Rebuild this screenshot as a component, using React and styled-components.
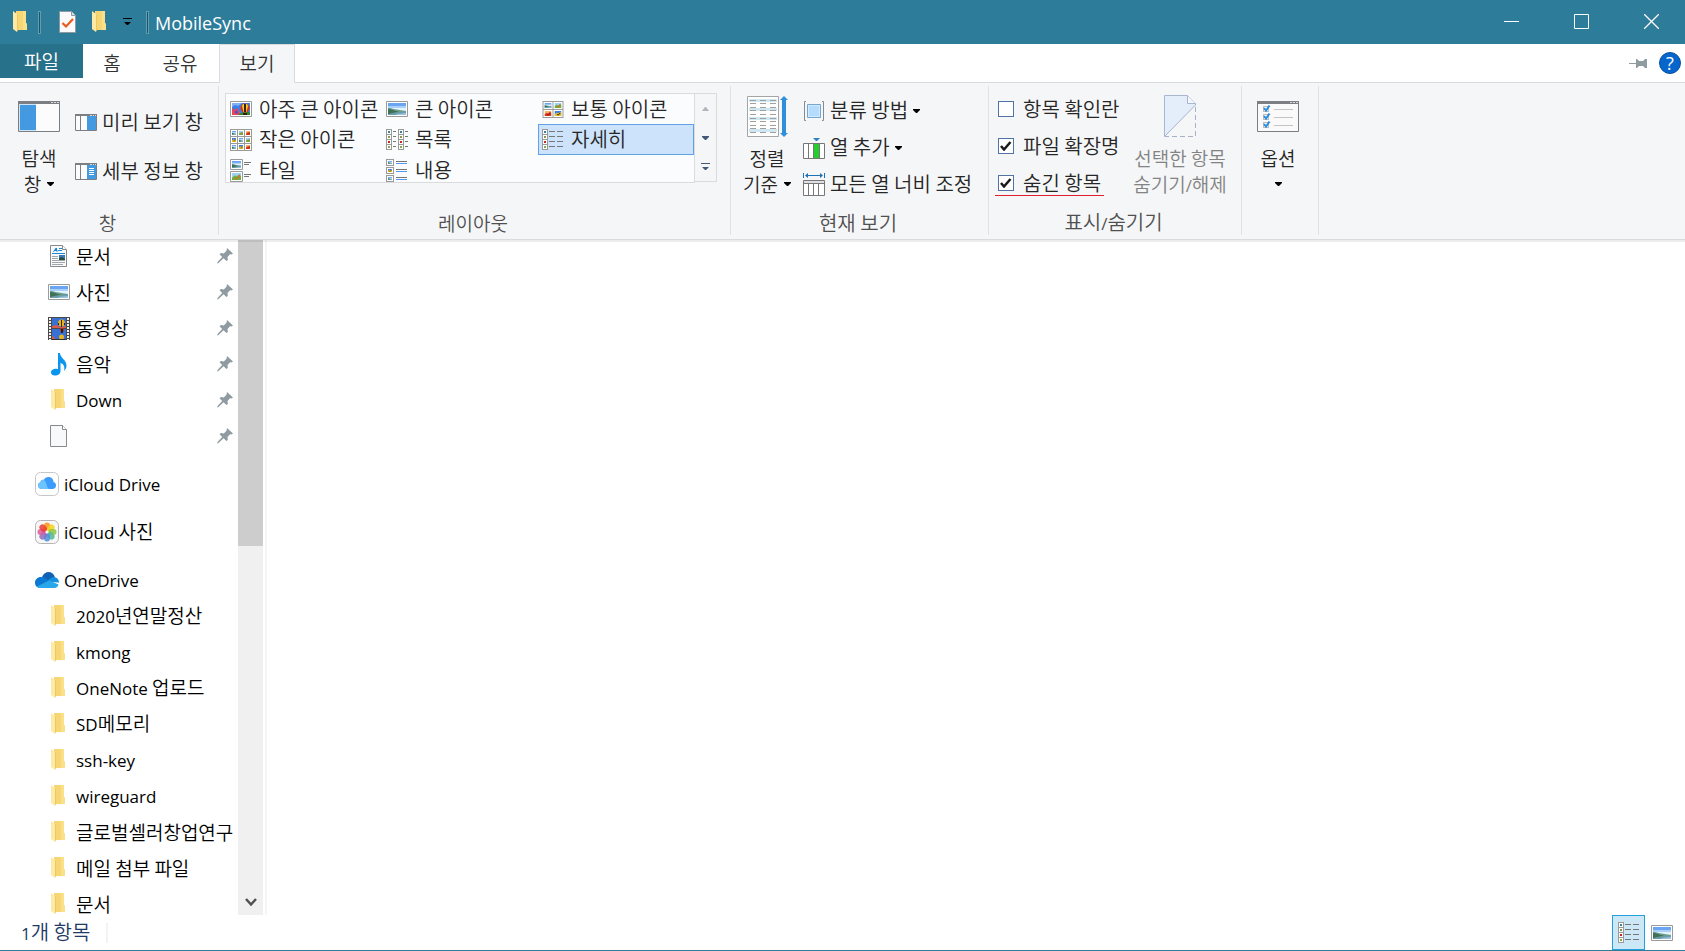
import React from 'react';
import styled, { createGlobalStyle } from 'styled-components';

const GlobalStyle = createGlobalStyle`
  *, *::before, *::after { box-sizing: border-box; }
  body {
    margin: 0;
    background: #fff;
    color: #000;
    font-family: 'Open Sans', 'Noto Sans CJK KR', sans-serif;
    font-size: 20px;
    line-height: 24px;
  }
  button {
    margin: 0;
    padding: 0;
    border: 0;
    background: none;
    color: inherit;
    font: inherit;
  }
  svg { display: block; flex: none; }
`;

/* ---------- text ---------- */

const Hangul = styled.span`
  font-family: 'Noto Sans CJK KR', sans-serif;
  font-weight: 350;
  font-size: ${(p) => (p.$compact ? 19 : 20)}px;
  white-space: pre;
`;

const Latin = styled.span`
  font-family: 'Open Sans', sans-serif;
  font-size: 17px;
  white-space: pre;
`;

const TextLine = styled.span`
  white-space: nowrap;
`;

/* Latin runs are set smaller than Hangul so that both look the same height. */
function Label({ children, compact }) {
  const runs = children.match(/[\x21-\x7e]+( [\x21-\x7e]+)*|[^\x21-\x7e]+/g) || [];
  return (
    <TextLine>
      {runs.map((run, i) =>
        /[\x21-\x7e]/.test(run)
          ? <Latin key={i}>{run}</Latin>
          : <Hangul key={i} $compact={compact}>{run}</Hangul>
      )}
    </TextLine>
  );
}

/* ---------- icons ---------- */

const Folder = () => (
  <svg width="18" height="22" viewBox="0 0 18 22" aria-hidden="true">
    <path d="M4 0H14V12L15 13V19H4Z" fill="#f7d775" />
    <path d="M11 0H14V12L15 13V19H11Z" fill="#fbe08a" />
    <path d="M1 0L5 3V21L1 18Z" fill="#ffe9a6" />
    <path d="M5 3V21L6 19V4Z" fill="#eec75f" />
  </svg>
);

const Caret = ({ color = '#000' }) => (
  <svg width="7" height="4" viewBox="0 0 7 4" aria-hidden="true">
    <path d="M0 0H7V1L4 4H3L0 1Z" fill={color} />
  </svg>
);

const BarCaret = ({ color = '#000' }) => (
  <svg width="9" height="8" viewBox="0 0 9 8" aria-hidden="true">
    <path d="M0 0H9V1H0ZM1 4H8L5 7H4Z" fill={color} />
  </svg>
);

const CheckedDocument = () => (
  <svg width="18" height="22" viewBox="0 0 18 22" aria-hidden="true">
    <path d="M.5.5H12.500L16.500 4.500V21.500H.5Z" fill="#fafafa" stroke="#8e9aa0" />
    <path d="M12.500.5V4.500H16.500" fill="#dde2e4" stroke="#8e9aa0" />
    <path d="M3.500 12L7 15.500L14 8" fill="none" stroke="#ea5b1b" strokeWidth="2.200" />
  </svg>
);

/* Miniature pictures; each kind has its own colours. */
function Scene({ x, y, w, h, kind = 'lake' }) {
  if (kind === 'lake') {
    return (
      <svg x={x} y={y} width={w} height={h} viewBox="0 0 18 12" preserveAspectRatio="none">
        <path d="M0 0H18V12H0Z" fill="#6aa5f2" />
        <path d="M0 3H18V6H0Z" fill="#a9d0fa" />
        <path d="M0 5H18V8H0Z" fill="#e3f3fc" />
        <path d="M0 5C4 5 8 7 18 8V12H0Z" fill="#6c9c8e" />
        <path d="M0 6C3 6 7 8 11 8.500L0 11Z" fill="#3f7058" />
        <path d="M2 11L18 8.500V12H0Z" fill="#6a9db4" />
        <path d="M9 11L18 10V12H8Z" fill="#9cc4dd" />
      </svg>
    );
  }
  const palette = {
    flower: ['#9ed0f8', '#6fae3a', '#e8622c'],
    red: ['#f2b36b', '#d93a1c', '#8c1a10'],
    balloon: ['#3f7fe0', '#f0c420', '#3a2a20'],
  }[kind];
  return (
    <svg x={x} y={y} width={w} height={h} viewBox="0 0 6 6" preserveAspectRatio="none">
      <path d="M0 0H6V6H0Z" fill={palette[0]} />
      <path d="M0 4L2 2L3 3L5 1L6 3V6H0Z" fill={palette[1]} />
      <path d="M2 4H4V5H2ZM4 2H5V4H4Z" fill={palette[2]} />
    </svg>
  );
}

const Picture = () => (
  <svg width="22" height="16" viewBox="0 0 22 16" aria-hidden="true">
    <path d="M.5.5H21.500V15.500H.5Z" fill="#fff" stroke="#9a9a9a" />
    <Scene x={2} y={2} w={18} h={12} />
  </svg>
);

const ExtraLarge = () => (
  <svg width="22" height="16" viewBox="0 0 22 16" aria-hidden="true">
    <path d="M.5.5H21.500V15.500H.5Z" fill="#fff" stroke="#9a9a9a" />
    <path d="M2 2H20V14H2Z" fill="#3d7fe6" />
    <path d="M2 2H12L8 5L5 4L2 6Z" fill="#7fb2f4" />
    <path d="M2 7L5 9L7 7L10 12V14H2Z" fill="#e8475e" />
    <path d="M3 8L5 11L7 9L8 13L5 12Z" fill="#4a4fc4" />
    <path d="M9 13L13 11H20V14H8Z" fill="#2e8a2c" />
    <circle cx="15" cy="7" r="4.500" fill="#e22a1c" />
    <path d="M12 5L13 3H17L18 5L16.500 11H13.500Z" fill="#f7cf1c" />
    <path d="M14 3H16V11H14Z" fill="#30241c" />
    <path d="M13 12H17V14H13Z" fill="#3a1c10" />
  </svg>
);

const kinds = ['lake', 'flower', 'red', 'balloon', 'lake', 'flower', 'lake', 'balloon', 'red'];

const SmallIcons = () => (
  <svg width="22" height="22" viewBox="0 0 22 22" aria-hidden="true">
    <path d="M0 0H22V22H0Z" fill="#9a9a9a" />
    {kinds.map((kind, i) => {
      const x = 1 + (i % 3) * 7;
      const y = 1 + Math.floor(i / 3) * 7;
      return (
        <g key={i}>
          <rect x={x} y={y} width="6" height="6" fill="#fff" />
          <Scene x={x + 1} y={y + 1} w={4} h={4} kind={kind} />
        </g>
      );
    })}
  </svg>
);

const MediumIcons = () => (
  <svg width="21" height="17" viewBox="0 0 21 17" aria-hidden="true">
    <path d="M0 0H21V17H0Z" fill="#9a9a9a" />
    {['lake', 'flower', 'red', 'balloon'].map((kind, i) => {
      const x = 1 + (i % 2) * 10;
      const y = 1 + Math.floor(i / 2) * 8;
      return (
        <g key={i}>
          <rect x={x} y={y} width="9" height="7" fill="#fff" />
          <Scene x={x + 1} y={y + 1} w={7} h={5} kind={kind} />
        </g>
      );
    })}
  </svg>
);

const dots = ['#3f7fa0', '#8a9a4a', '#c8281c', '#7fae4a'];

const Strip = ({ x }) => (
  <g>
    <rect x={x} y="0" width="6" height="21" fill="#9a9a9a" />
    {dots.map((fill, i) => (
      <g key={i}>
        <rect x={x + 1} y={1 + i * 5} width="4" height="4" fill="#fff" />
        <rect x={x + 2} y={2 + i * 5} width="2" height="2" fill={fill} />
      </g>
    ))}
  </g>
);

const ListIcon = () => (
  <svg width="22" height="21" viewBox="0 0 22 21" aria-hidden="true">
    <Strip x={0} />
    <Strip x={12} />
    <path d="M7 2H10V3H7ZM7 7H10V8H7ZM7 12H10V13H7ZM7 17H10V18H7ZM19 2H22V3H19ZM19 7H22V8H19ZM19 12H22V13H19ZM19 17H22V18H19Z" fill="#777" />
  </svg>
);

const DetailsIcon = () => (
  <svg width="22" height="21" viewBox="0 0 22 21" aria-hidden="true">
    <Strip x={0} />
    <path d="M7 2H13V3H7ZM7 7H13V8H7ZM7 12H13V13H7ZM7 17H13V18H7ZM15 2H21V3H15ZM15 7H21V8H15ZM15 12H21V13H15ZM15 17H21V18H15Z" fill="#777" />
  </svg>
);

const TilesIcon = () => (
  <svg width="22" height="23" viewBox="0 0 22 23" aria-hidden="true">
    <path d="M.5.5H12.500V10.500H.5ZM.5 12.500H12.500V22.500H.5Z" fill="#fff" stroke="#9a9a9a" />
    <Scene x={2} y={2} w={9} h={7} />
    <Scene x={2} y={14} w={9} h={7} kind="flower" />
    <path d="M14 3H21V4H14ZM14 5H19V6H14ZM14 15H21V16H14ZM14 17H19V18H14Z" fill="#777" />
  </svg>
);

const ContentIcon = () => (
  <svg width="22" height="23" viewBox="0 0 22 23" aria-hidden="true">
    {['lake', 'balloon', 'lake'].map((kind, i) => (
      <g key={i}>
        <rect x="0.500" y={0.5 + i * 8} width="7" height="6" fill="#fff" stroke="#9a9a9a" />
        <Scene x={2} y={2 + i * 8} w={4} h={3} kind={kind} />
        <rect x="10" y={2 + i * 8} width="11" height="1" fill="#777" />
        <rect x="10" y={4 + i * 8} width="11" height="1" fill="#5b98f5" />
      </g>
    ))}
  </svg>
);

const NavPaneIcon = () => (
  <svg width="42" height="31" viewBox="0 0 42 31" aria-hidden="true">
    <path d="M.5.5H41.500V30.500H.5Z" fill="#fcfcfc" stroke="#7b7e82" />
    <path d="M0 0H42V3H0Z" fill="#7b7e82" />
    <path d="M33 1H35V2H33ZM36 1H38V2H36ZM39 1H41V2H39Z" fill="#dcdcdc" />
    <path d="M1 3H18V30H1Z" fill="#cfe4f7" />
    <path d="M2 4H18V29H2Z" fill="#439ae0" />
  </svg>
);

const SidePaneIcon = ({ lines }) => (
  <svg width="22" height="17" viewBox="0 0 22 17" aria-hidden="true">
    <path d="M.5.5H21.500V16.500H.5Z" fill="#fcfcfc" stroke="#7b7e82" />
    <path d="M0 0H22V2H0ZM5 2H6V16H5Z" fill="#7b7e82" />
    <path d="M15 1H17V2H15ZM18 1H19V2H18ZM20 1H21V2H20Z" fill="#dcdcdc" />
    <path d="M12 2H21V16H12Z" fill="#439ae0" />
    {lines && <path d="M14 5H19V6H14ZM14 7H19V8H14ZM14 9H19V10H14ZM14 11H19V12H14Z" fill="#fff" />}
  </svg>
);

const SortIcon = () => (
  <svg width="41" height="41" viewBox="0 0 41 41" aria-hidden="true">
    <path d="M.5.5H31.500V40.500H.5Z" fill="#fff" stroke="#a5a5a5" />
    {[3, 12, 21, 33].map((y) => (
      <rect key={y} x="2" y={y} width="28" height="3" fill="#cfe7f3" />
    ))}
    {[4, 7, 11, 14, 18, 22, 25, 29, 32, 36].map((y) => (
      <path key={y} d={`M3 ${y}.5H9M13 ${y}.5H19M23 ${y}.5H29`} stroke="#a29f9d" />
    ))}
    <path d="M37 0L41 4H39V37H41L37 41L33 37H35V4H33Z" fill="#2f8fdc" />
  </svg>
);

const GroupByIcon = () => (
  <svg width="22" height="20" viewBox="0 0 22 20" aria-hidden="true">
    <path d="M3 .5H1.500V19.500H3M19 .5H20.500V19.500H19" fill="none" stroke="#8a8a8a" />
    <path d="M4.500 3.500H17.500V16.500H4.500Z" fill="#b5dcfc" stroke="#72a7d4" />
    <path d="M5.500 4.500H16.500V15.500H5.500Z" fill="none" stroke="#d5ebfc" />
  </svg>
);

const AddColumnIcon = () => (
  <svg width="22" height="22" viewBox="0 0 22 22" aria-hidden="true">
    <path d="M10 1H17L14 4H13Z" fill="#2b7fc4" />
    <path d="M.5 6.500H21.500V21.500H.5Z" fill="#fff" stroke="#777" />
    <path d="M5 6H6V22H5ZM10 6H11V22H10ZM16 6H17V22H16Z" fill="#777" />
    <path d="M11 7H16V21H11Z" fill="#24cf2c" />
  </svg>
);

const FitColumnsIcon = () => (
  <svg width="22" height="23" viewBox="0 0 22 23" aria-hidden="true">
    <path d="M0 0H1V5H0ZM21 0H22V5H21ZM2 2.500L5 0V2H17V0L20 2.500L17 5V3H5V5Z" fill="#1f72b4" />
    <path d="M.5 7.500H21.500V22.500H.5Z" fill="#fff" stroke="#777" />
    <path d="M1 8H21V10H1Z" fill="#e0dfe2" />
    <path d="M0 10H22V11H0ZM5 11H6V22H5ZM10 11H11V22H10ZM15 11H16V22H15Z" fill="#777" />
  </svg>
);

const HideIcon = () => (
  <svg width="34" height="42" viewBox="0 0 34 42" aria-hidden="true">
    <path d="M1.500.5H24.500L32.500 8.500V10L1.500 41.500Z" fill="#e4edfa" stroke="#a9b6d0" />
    <path d="M24.500.5V8.500H32.500" fill="#f3f6fb" stroke="#a9b6d0" />
    <path d="M32.500 12V41.500H2" fill="none" stroke="#a9b1c6" strokeDasharray="5 3" />
  </svg>
);

const OptionsIcon = () => (
  <svg width="42" height="31" viewBox="0 0 42 31" aria-hidden="true">
    <path d="M.5.5H41.500V30.500H.5Z" fill="#fafafa" stroke="#7b7e82" />
    <path d="M0 0H42V3H0Z" fill="#7b7e82" />
    <path d="M33 1H35V2H33ZM36 1H38V2H36ZM39 1H41V2H39Z" fill="#dcdcdc" />
    {[5, 13, 21].map((y) => (
      <g key={y}>
        <rect x="6.500" y={y + 0.5} width="5" height="5" fill="#fff" stroke="#bdbdbd" />
        <path d={`M7 ${y + 2}L9 ${y + 4.5}L12.500 ${y - 0.5}`} fill="none" stroke="#2a8ce0" strokeWidth="2" />
        <rect x="17" y={y + 3} width="19" height="1" fill="#c4c4c4" />
      </g>
    ))}
  </svg>
);

const PinIcon = () => (
  <svg width="16" height="16" viewBox="0 0 16 16" aria-hidden="true">
    <path d="M10 0L16 5.500L14.500 6.500L13 6.300L10.500 9L10.800 12L9.500 13L6.500 10.300L1.500 15L.3 15.700L.5 14L5.200 9L2.500 6.300L4 5L6.800 5.500L9.500 2.800Z" fill="#8f9aa1" />
  </svg>
);

const RibbonPin = () => (
  <svg width="18" height="11" viewBox="0 0 18 11" aria-hidden="true">
    <path d="M0 5H7V1H8L10 3H14L16 1H18V10H16L14 8H10L8 10H7V6H0Z" fill="#8f9aa1" />
  </svg>
);

const DocumentIcon = ({ filled }) => (
  <svg width="18" height="22" viewBox="0 0 18 22" aria-hidden="true">
    <path d="M.5.5H12.500L16.500 4.500V21.500H.5Z" fill="#f8f9fa" stroke="#8a8a8a" />
    <path d="M12.500.5V4.500H16.500" fill="#fff" stroke="#8a8a8a" />
    {filled && (
      <>
        <path d="M3 7L5.500 3H7L7.500 7H6.500V6H4.500L4 7ZM9 3H12V4H9ZM8 5H12V6H8ZM2 8H15V9H2Z" fill="#1e88d4" />
        <path d="M2 11H8V12H2ZM2 13H8V14H2ZM2 15H15V16H2ZM2 17H15V18H2ZM2 19H13V20H2Z" fill="#a0a6aa" />
        <path d="M9 10H15V15H9Z" fill="#3b78b8" />
        <path d="M9 13L12 12L15 14V15H9Z" fill="#274c3c" />
      </>
    )}
  </svg>
);

const VideoIcon = () => (
  <svg width="22" height="23" viewBox="0 0 22 23" aria-hidden="true">
    <path d="M0 0H22V23H0Z" fill="#4a4a4a" />
    <path d="M2 1V23M20 1V23" stroke="#f2f2f2" strokeWidth="2" strokeDasharray="2 1" />
    <path d="M4 1H18V11H4ZM4 12H18V22H4Z" fill="#3970d4" />
    <path d="M4 9L8 8L12 10L18 9V11H4Z" fill="#d85a48" />
    <circle cx="13.500" cy="6" r="3.500" fill="#e2b41c" />
    <path d="M13 3H14V10H13ZM10 6H11V8H10ZM16 6H17V8H16Z" fill="#40241c" />
    <circle cx="14" cy="13" r="2" fill="#b8321c" />
    <path d="M13 12H15V16H13Z" fill="#282018" />
    <circle cx="13.500" cy="20" r="2.500" fill="#e2b41c" />
    <path d="M4 22H18V23H4Z" fill="#333" />
    <path d="M4 19L6 20L7 22H4Z" fill="#d85a48" />
  </svg>
);

const MusicIcon = () => (
  <svg width="18" height="23" viewBox="0 0 18 23" aria-hidden="true">
    <path d="M8 0H10C10 5 17 7 16.500 13C16.300 15 15.500 16.500 14 18C15 14 14 11 10.500 10V18C10.500 21 8 22.500 5 22.500C2.500 22.500 1 21.200 1 19.400C1 17 3.500 15.700 6 15.700C7 15.700 7.500 16 8 16.200Z" fill="#0a96ee" />
  </svg>
);

const ICloudIcon = () => (
  <svg width="24" height="24" viewBox="0 0 24 24" aria-hidden="true">
    <rect x="0.500" y="0.500" width="23" height="23" rx="5" fill="#fff" stroke="#c6c6c6" />
    <path d="M7 17C4.500 17 3 15.500 3 13.500C3 11.800 4 10.600 5.500 10.300C5.500 8.500 7 7.500 8.700 8C9.700 5.900 11.300 5 13.500 5C16.500 5 18.500 7.200 18.500 10C20.300 10.500 21 11.800 21 13.500C21 15.500 19.500 17 17.500 17Z" fill="#3c9bfb" />
    <path d="M7 17C4.500 17 3 15.500 3 13.500C3 11.800 4 10.600 5.500 10.300C5.500 8.500 7 7.500 8.700 8C12 9 11 15 14 17Z" fill="#6cc3fd" />
  </svg>
);

const petals = ['#f7941d', '#f5d31c', '#8cc63f', '#4fb99a', '#4a90d9', '#8f6cc0', '#d65aa0', '#ee3b2f'];

const PhotosIcon = () => (
  <svg width="24" height="24" viewBox="0 0 24 24" aria-hidden="true">
    <rect x="0.500" y="0.500" width="23" height="23" rx="5" fill="#f7f7f7" stroke="#b4b4b4" />
    {petals.map((fill, i) => (
      <rect key={fill} x="9" y="2.500" width="6" height="8" rx="3" fill={fill} opacity="0.85" transform={`rotate(${i * 45} 12 12)`} />
    ))}
  </svg>
);

const OneDriveIcon = () => (
  <svg width="24" height="16" viewBox="0 0 24 16" aria-hidden="true">
    <path d="M7 5C8.500 1.500 11 0 13.500 0C16.500 0 19 2 19.800 5L14 9L7 5Z" fill="#0f62b5" />
    <path d="M5.500 16C2 16 0 13.500 0 10.700C0 7.500 2.500 5 5.800 5C8 4.500 10 6 15 9L5 16Z" fill="#0b78d4" />
    <path d="M13 8.500C15 6 17 5 19.500 5C22 5.500 24 7.500 24 10.500L15 10Z" fill="#1490df" />
    <path d="M2 14.500L14 8.500L23.500 12.500C23 14.800 21.500 16 19.500 16H5.500C4 16 2.800 15.500 2 14.500Z" fill="#28a8ea" />
  </svg>
);

/* ---------- title bar ---------- */

const Window = styled.div`
  display: flex;
  flex-direction: column;
  height: 100vh;
  overflow: hidden;
  border-bottom: 1px solid #2d7d9a;
`;

const TitleBar = styled.header`
  display: flex;
  align-items: center;
  flex: none;
  height: 44px;
  padding-left: 12px;
  background: #2d7d9a;
  color: #fff;
`;

const QuickAccess = styled.div`
  display: flex;
  align-items: center;
  gap: 14px;
  padding-left: 18px;
  padding-right: 14px;
`;

const TitleDivider = styled.span`
  width: 3px;
  height: 23px;
  margin-left: ${(p) => p.$gap || 0}px;
  border: 1px solid #5f9db3;
  background: #1d5468;
`;

const Title = styled.h1`
  flex: 1;
  margin: 0 0 0 6px;
  padding-top: 2px;
  font-size: 18px;
  font-weight: 400;
  line-height: 24px;
`;

const WindowButton = styled.button`
  display: grid;
  place-items: center;
  width: 70px;
  height: 44px;
  padding-left: 2px;
  padding-bottom: 2px;
`;

/* ---------- tabs ---------- */

const TabBar = styled.nav`
  display: flex;
  flex: none;
  height: 39px;
  padding-right: 4px;
  border-bottom: 1px solid #dadbdc;
`;

const FileTab = styled.button`
  width: 83px;
  height: 34px;
  background: #28718b;
  color: #fff;
`;

const Tab = styled.button`
  width: ${(p) => p.$width}px;
  height: 39px;
  padding-bottom: 2px;
  color: #333;
  border: 1px solid ${(p) => (p.$active ? '#dadbdc' : 'transparent')};
  border-bottom: 0;
  background: ${(p) => (p.$active ? '#f5f6f7' : 'transparent')};
`;

const TabTools = styled.div`
  display: flex;
  align-items: center;
  gap: 12px;
  margin-left: auto;
`;

const HelpButton = styled.button`
  width: 22px;
  height: 22px;
  border: 1px solid #0a4f9c;
  border-radius: 50%;
  background: #0666cc;
  color: #fff;
  font-size: 18px;
  line-height: 20px;
`;

/* ---------- ribbon ---------- */

const Ribbon = styled.section`
  position: relative;
  z-index: 1;
  display: flex;
  flex: none;
  height: 155px;
  padding: 3px 0;
  background: #f5f6f7;
  color: #262626;
  box-shadow: 0 1px 0 #f5f6f7, 0 2px 0 #dadbdc, 0 4px 0 rgba(0, 0, 0, 0.07);
`;

const Group = styled.section`
  display: flex;
  flex-direction: column;
  flex: 0 0 ${(p) => p.$width}px;
  border-right: 1px solid #e0e1e3;
`;

const GroupBody = styled.div`
  display: flex;
  align-items: flex-start;
  gap: 5px;
  flex: 1;
  padding-left: ${(p) => p.$inset}px;
`;

const GroupName = styled.h2`
  margin: 0;
  padding-right: 3px;
  color: #505050;
  font-size: 20px;
  font-weight: 400;
  line-height: 22px;
  text-align: center;
`;

const BigButton = styled.button`
  display: flex;
  flex-direction: column;
  align-items: center;
  width: ${(p) => p.$width || 62}px;
  line-height: 25px;
  &:disabled { color: #838383; }
`;

const BigIcon = styled.span`
  display: grid;
  place-items: center;
  height: 59px;
  padding-top: 1px;
`;

const CaretLine = styled.span`
  display: flex;
  align-items: center;
  justify-content: center;
  gap: 6px;
  height: 25px;
`;

const Stack = styled.div`
  display: flex;
  flex-direction: column;
  align-items: flex-start;
  gap: ${(p) => p.$gap}px;
  padding-top: ${(p) => p.$gap}px;
`;

const CommandButton = styled.button`
  display: flex;
  align-items: center;
  gap: 5px;
  height: 25px;
`;

const CheckStack = styled.div`
  display: flex;
  flex-direction: column;
  align-items: flex-start;
  gap: 12px;
  width: 130px;
  padding-top: 11px;
`;

const CheckLabel = styled.label`
  display: flex;
  align-items: center;
  gap: 9px;
  height: 25px;
  padding: 0 3px;
  border-bottom: 1px solid ${(p) => (p.$marked ? '#e0202c' : 'transparent')};
`;

const CheckBox = styled.span`
  display: grid;
  place-items: center;
  > * { grid-area: 1 / 1; }
  input {
    appearance: none;
    width: 16px;
    height: 16px;
    margin: 0;
    border: 1px solid #5272a5;
    background: #fff;
  }
  svg { visibility: hidden; pointer-events: none; }
  input:checked + svg { visibility: visible; }
`;

const Gallery = styled.div`
  display: flex;
  height: 90px;
  margin-top: 7px;
`;

const GalleryGrid = styled.div`
  display: grid;
  grid-template-columns: repeat(3, 156px);
  grid-template-rows: 30px 31px 31px;
  overflow: hidden;
  border: 1px solid #dadbdc;
  background: #fbfcfe;
`;

const GalleryItem = styled.button`
  display: flex;
  align-items: center;
  gap: 7px;
  padding-left: 3px;
  border: 1px solid ${(p) => (p.$selected ? '#62a2e4' : 'transparent')};
  background: ${(p) => (p.$selected ? '#cde3fb' : 'transparent')};
  > svg { width: 22px; }
`;

const GalleryScroll = styled.div`
  display: grid;
  grid-template-rows: repeat(3, 1fr);
  width: 22px;
  height: 89px;
  border: 1px solid #dadbdc;
  border-left: 0;
`;

const GalleryScrollButton = styled.button`
  display: grid;
  place-items: center;
`;

/* ---------- content ---------- */

const Body = styled.div`
  display: flex;
  flex: 1;
  min-height: 0;
`;

const Sidebar = styled.nav`
  display: flex;
  flex: none;
  width: 267px;
  border-right: 2px solid #f5f5f5;
`;

const Tree = styled.ul`
  width: 238px;
  margin: 0;
  padding: 0;
  overflow: hidden;
  list-style: none;
`;

const TreeItem = styled.li`
  display: flex;
  align-items: center;
  height: 36px;
  margin-top: ${(p) => (p.$root ? 12 : 0)}px;
  padding-left: ${(p) => (p.$root ? 35 : 47)}px;
  padding-right: 5px;
`;

const TreeLink = styled.a`
  display: flex;
  align-items: center;
  flex: 1;
  min-width: 0;
  gap: 5px;
  color: #000;
  text-decoration: none;
`;

const IconSlot = styled.span`
  display: grid;
  place-items: center;
  flex: none;
  width: 24px;
`;

const ScrollTrack = styled.div`
  display: flex;
  flex-direction: column;
  align-items: center;
  justify-content: space-between;
  width: 25px;
  padding-bottom: 8px;
  background: #f0f0f0;
`;

const ScrollThumb = styled.div`
  width: 100%;
  height: 46%;
  background: #cdcdcd;
`;

const FilePane = styled.main`
  flex: 1;
  background: #fff;
`;

const StatusBar = styled.footer`
  display: flex;
  align-items: center;
  flex: none;
  height: 35px;
  padding: 0 10px 0 21px;
  color: #1e3a66;
`;

const StatusText = styled.span`
  padding-right: 16px;
  border-right: 2px solid #f3f3f3;
  line-height: 18px;
`;

const ViewSwitch = styled.div`
  display: flex;
  gap: 4px;
  margin-left: auto;
`;

const ViewButton = styled.button`
  display: grid;
  place-items: center;
  width: ${(p) => (p.$active ? 33 : 26)}px;
  height: 35px;
  border: 1px solid ${(p) => (p.$active ? '#26a0da' : 'transparent')};
  background: ${(p) => (p.$active ? '#cce8f6' : 'transparent')};
`;

const layouts = [
  ['아주 큰 아이콘', ExtraLarge],
  ['큰 아이콘', Picture],
  ['보통 아이콘', MediumIcons],
  ['작은 아이콘', SmallIcons],
  ['목록', ListIcon],
  ['자세히', DetailsIcon],
  ['타일', TilesIcon],
  ['내용', ContentIcon],
];

const tree = [
  { name: '문서', icon: <DocumentIcon filled />, pinned: true },
  { name: '사진', icon: <Picture />, pinned: true },
  { name: '동영상', icon: <VideoIcon />, pinned: true },
  { name: '음악', icon: <MusicIcon />, pinned: true },
  { name: 'Down', icon: <Folder />, pinned: true },
  { name: '', icon: <DocumentIcon />, pinned: true },
  { name: 'iCloud Drive', icon: <ICloudIcon />, root: true },
  { name: 'iCloud 사진', icon: <PhotosIcon />, root: true },
  { name: 'OneDrive', icon: <OneDriveIcon />, root: true },
  { name: '2020년연말정산', icon: <Folder /> },
  { name: 'kmong', icon: <Folder /> },
  { name: 'OneNote 업로드', icon: <Folder /> },
  { name: 'SD메모리', icon: <Folder /> },
  { name: 'ssh-key', icon: <Folder /> },
  { name: 'wireguard', icon: <Folder /> },
  { name: '글로벌셀러창업연구', icon: <Folder /> },
  { name: '메일 첨부 파일', icon: <Folder /> },
  { name: '문서', icon: <Folder /> },
];

function Check({ label, checked, marked }) {
  return (
    <CheckLabel $marked={marked}>
      <CheckBox>
        <input type="checkbox" defaultChecked={checked} />
        <svg width="12" height="10" viewBox="0 0 12 10">
          <path d="M1 5L4 8.500L10.500 1" fill="none" stroke="#1a1a1a" strokeWidth="2.500" />
        </svg>
      </CheckBox>
      <Label>{label}</Label>
    </CheckLabel>
  );
}

export default function App() {
  return (
    <Window>
      <GlobalStyle />
      <TitleBar>
        <Folder />
        <TitleDivider $gap={8} />
        <QuickAccess>
          <CheckedDocument />
          <Folder />
          <BarCaret />
        </QuickAccess>
        <TitleDivider />
        <Title>MobileSync</Title>
        <WindowButton aria-label="최소화">
          <svg width="15" height="15" viewBox="0 0 15 15"><path d="M0 7.500H15" stroke="#fff" /></svg>
        </WindowButton>
        <WindowButton aria-label="최대화">
          <svg width="15" height="15" viewBox="0 0 15 15"><path d="M.5.5H14.500V14.500H.5Z" fill="none" stroke="#fff" /></svg>
        </WindowButton>
        <WindowButton aria-label="닫기">
          <svg width="15" height="15" viewBox="0 0 15 15"><path d="M0 0L15 15M15 0L0 15" stroke="#fff" strokeWidth="1.300" /></svg>
        </WindowButton>
      </TitleBar>

      <TabBar>
        <FileTab><Label compact>파일</Label></FileTab>
        <Tab $width={58}><Label compact>홈</Label></Tab>
        <Tab $width={78}><Label compact>공유</Label></Tab>
        <Tab $width={76} $active><Label compact>보기</Label></Tab>
        <TabTools>
          <RibbonPin />
          <HelpButton>?</HelpButton>
        </TabTools>
      </TabBar>

      <Ribbon>
        <Group $width={219}>
          <GroupBody $inset={8}>
            <BigButton>
              <BigIcon><NavPaneIcon /></BigIcon>
              <Label compact>탐색</Label>
              <CaretLine><Label compact>창</Label><Caret /></CaretLine>
            </BigButton>
            <Stack $gap={24}>
              <CommandButton><SidePaneIcon /><Label>미리 보기 창</Label></CommandButton>
              <CommandButton><SidePaneIcon lines /><Label>세부 정보 창</Label></CommandButton>
            </Stack>
          </GroupBody>
          <GroupName><Label compact>창</Label></GroupName>
        </Group>

        <Group $width={512}>
          <GroupBody $inset={6}>
            <Gallery>
              <GalleryGrid>
                {layouts.map(([name, Icon]) => (
                  <GalleryItem key={name} $selected={name === '자세히'}>
                    <Icon />
                    <Label>{name}</Label>
                  </GalleryItem>
                ))}
              </GalleryGrid>
              <GalleryScroll>
                <GalleryScrollButton aria-label="위로">
                  <svg width="7" height="4" viewBox="0 0 7 4"><path d="M0 4H7L4 0H3Z" fill="#b0b6be" /></svg>
                </GalleryScrollButton>
                <GalleryScrollButton aria-label="아래로"><Caret color="#44597a" /></GalleryScrollButton>
                <GalleryScrollButton aria-label="더 보기"><BarCaret color="#44597a" /></GalleryScrollButton>
              </GalleryScroll>
            </Gallery>
          </GroupBody>
          <GroupName><Label compact>레이아웃</Label></GroupName>
        </Group>

        <Group $width={258}>
          <GroupBody $inset={5}>
            <BigButton>
              <BigIcon><SortIcon /></BigIcon>
              <Label compact>정렬</Label>
              <CaretLine><Label compact>기준</Label><Caret /></CaretLine>
            </BigButton>
            <Stack $gap={12}>
              <CommandButton><GroupByIcon /><Label>분류 방법</Label><Caret /></CommandButton>
              <CommandButton><AddColumnIcon /><Label>열 추가</Label><Caret /></CommandButton>
              <CommandButton><FitColumnsIcon /><Label>모든 열 너비 조정</Label></CommandButton>
            </Stack>
          </GroupBody>
          <GroupName><Label>현재 보기</Label></GroupName>
        </Group>

        <Group $width={253}>
          <GroupBody $inset={6}>
            <CheckStack>
              <Check label="항목 확인란" />
              <Check label="파일 확장명" checked />
              <Check label="숨긴 항목" checked marked />
            </CheckStack>
            <BigButton $width={100} disabled>
              <BigIcon><HideIcon /></BigIcon>
              <Label compact>선택한 항목</Label>
              <Label compact>숨기기/해제</Label>
            </BigButton>
          </GroupBody>
          <GroupName><Label>표시/숨기기</Label></GroupName>
        </Group>

        <Group $width={77}>
          <GroupBody $inset={5}>
            <BigButton>
              <BigIcon><OptionsIcon /></BigIcon>
              <Label compact>옵션</Label>
              <CaretLine><Caret /></CaretLine>
            </BigButton>
          </GroupBody>
        </Group>
      </Ribbon>

      <Body>
        <Sidebar>
          <Tree>
            {tree.map((item, i) => (
              <TreeItem key={i} $root={item.root}>
                <TreeLink href="#" aria-label={item.name || '파일'}>
                  <IconSlot>{item.icon}</IconSlot>
                  <Label compact>{item.name}</Label>
                </TreeLink>
                {item.pinned && <PinIcon />}
              </TreeItem>
            ))}
          </Tree>
          <ScrollTrack>
            <ScrollThumb />
            <svg width="12" height="9" viewBox="0 0 12 9" aria-hidden="true">
              <path d="M1 1L6 6.500L11 1" fill="none" stroke="#505050" strokeWidth="2.500" />
            </svg>
          </ScrollTrack>
        </Sidebar>
        <FilePane />
      </Body>

      <StatusBar>
        <StatusText><Label>1개 항목</Label></StatusText>
        <ViewSwitch>
          <ViewButton $active aria-label="자세히"><DetailsIcon /></ViewButton>
          <ViewButton aria-label="큰 아이콘"><Picture /></ViewButton>
        </ViewSwitch>
      </StatusBar>
    </Window>
  );
}
